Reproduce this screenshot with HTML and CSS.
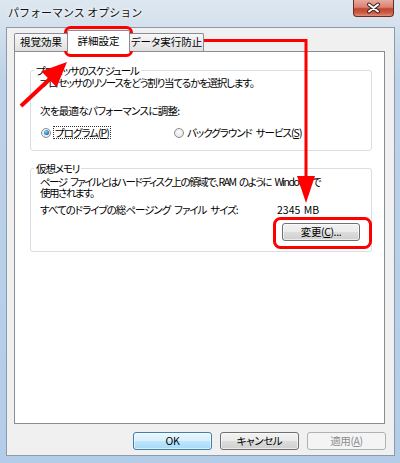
FILE: index.html
```html
<!DOCTYPE html>
<html lang="ja">
<head>
<meta charset="utf-8">
<title>パフォーマンス オプション</title>
<link rel="stylesheet" href="styles.css">
</head>
<body>
<div class="window">
  <div class="titlebar">
    <span class="title">パフォーマンス オプション</span>
    <div class="close">
      <svg width="41" height="17" viewBox="0 0 41 17">
        <path d="M16 4.5 L25 11.5 M25 4.5 L16 11.5" stroke="#3b2320" stroke-width="4" stroke-linecap="round" fill="none"/>
        <path d="M16 4.5 L25 11.5 M25 4.5 L16 11.5" stroke="#ffffff" stroke-width="2" stroke-linecap="round" fill="none"/>
      </svg>
    </div>
  </div>
  <div class="client">
    <div class="tabs">
      <div class="tab t1">視覚効果</div>
      <div class="tab t2 active">詳細設定</div>
      <div class="tab t3">データ実行防止</div>
    </div>
    <div class="panel">
      <fieldset class="group g1">
        <legend>プロセッサのスケジュール</legend>
        <p class="line first">プロセッサのリソースをどう割り当てるかを選択します。</p>
        <p class="line adjust">次を最適なパフォーマンスに調整:</p>
        <div class="radios">
          <label class="radio"><span class="dot checked"></span><span class="focus">プログラム(<u>P</u>)</span></label>
          <label class="radio"><span class="dot"></span><span>バックグラウンド サービス(<u>S</u>)</span></label>
        </div>
      </fieldset>
      <fieldset class="group g2">
        <legend>仮想メモリ</legend>
        <p class="desc">ページ ファイルとはハードディスク上の領域で、RAM のように Windows で<br>使用されます。</p>
        <div class="size-row"><span>すべてのドライブの総ページング ファイル サイズ:</span><span class="mb">2345 MB</span></div>
        <div class="btn-row"><button class="btn">変更(<u>C</u>)...</button></div>
      </fieldset>
    </div>
    <div class="footer">
      <button class="btn default">OK</button>
      <button class="btn">キャンセル</button>
      <button class="btn disabled">適用(<u>A</u>)</button>
    </div>
  </div>
  <svg class="annot" width="400" height="463" viewBox="0 0 400 463">
    <rect x="65.5" y="27.5" width="66" height="28" rx="5" ry="5" fill="none" stroke="#ff0000" stroke-width="3"/>
    <rect x="274.5" y="218.5" width="96" height="29" rx="6" ry="6" fill="none" stroke="#ff0000" stroke-width="3"/>
    <polyline points="133,40.5 306,40.5 306,180" fill="none" stroke="#ff0000" stroke-width="3"/>
    <polygon points="297,176 315,176 306,203" fill="#ff0000"/>
    <line x1="21" y1="106" x2="52" y2="77" stroke="#ff0000" stroke-width="4"/>
    <polygon points="67,62 56.6,87.3 41.4,71.3" fill="#ff0000"/>
  </svg>
</div>
</body>
</html>
```
FILE: styles.css
```css
* { box-sizing: border-box; }
html, body { margin: 0; padding: 0; }
body {
  width: 400px;
  height: 463px;
  overflow: hidden;
  font-family: "Noto Sans CJK JP", "Noto Sans", sans-serif;
  font-size: 10.5px;
  font-feature-settings: "palt";
  color: #000;
  background: #fff;
}
.window {
  position: relative;
  width: 400px;
  height: 463px;
  padding: 0 5px 7px 6px;
  display: flex;
  flex-direction: column;
  background: linear-gradient(180deg, #dde7f0 0px, #d4e0ec 27px, #bcd2e8 80px, #b3cde8 100%);
}
.titlebar {
  height: 27px;
  flex: none;
  display: flex;
  justify-content: space-between;
  align-items: flex-start;
}
.title {
  margin-top: 4px;
  padding-left: 2px;
  font-size: 11px;
  line-height: 16px;
  font-feature-settings: normal;
  color: #111;
  white-space: nowrap;
  text-shadow: 0 0 5px #fff, 0 0 3px #fff;
}
.close {
  width: 41px;
  height: 17px;
  margin-right: 1px;
  border: 1px solid #6b2c22;
  border-top: none;
  border-radius: 0 0 4px 4px;
  background: linear-gradient(180deg, #e7aa9e 0%, #d98272 45%, #c4452f 55%, #cc5b44 80%, #e08f78 100%);
}
.close svg { display: block; margin-left: -1px; }
.client {
  flex: 1;
  display: flex;
  flex-direction: column;
  border: 1px solid #8b9bad;
  background: #f0f0f0;
  padding: 2px 9px 5px 7px;
}
.tabs {
  display: flex;
  align-items: flex-end;
  height: 21px;
  flex: none;
  position: relative;
  z-index: 1;
}
.tab {
  height: 18px;
  border: 1px solid #898c95;
  border-bottom: none;
  border-radius: 2px 2px 0 0;
  line-height: 16px;
  text-align: center;
  white-space: nowrap;
  background: linear-gradient(180deg, #f8f8f8 0%, #ececec 50%, #e0e0e0 100%);
}
.t1 { width: 54px; }
.t2 { width: 63px; }
.t3 { width: 75px; }
.tab.active {
  height: 22px;
  margin: 0 -1px -1px;
  line-height: 20px;
  background: #fff;
}
.panel {
  height: 373px;
  flex: none;
  background: #fff;
  border: 1px solid #898c95;
  padding: 12px 12px 0 15px;
}
.group {
  margin: 0;
  min-width: 0;
  border: 1px solid #d5dfe5;
  border-radius: 3px;
  padding: 0 11px 11px 9px;
  letter-spacing: -1px;
  word-spacing: 2.5px;
  white-space: nowrap;
}
.group legend {
  margin-left: -6px;
  padding: 0 2px;
  line-height: 13px;
  letter-spacing: -1.1px;
}
.line { margin: 0; line-height: 12px; }
.first { letter-spacing: -1.2px; }
.adjust { margin-top: 16px; letter-spacing: -0.7px; }
.radios {
  margin-top: 9px;
  display: grid;
  grid-template-columns: 133px auto;
  height: 13px;
  line-height: 13px;
}
.radio {
  display: flex;
  align-items: center;
  gap: 3px;
}
.dot {
  width: 10px;
  height: 10px;
  margin-left: 1px;
  border-radius: 50%;
  border: 1px solid #8e8f8f;
  background: radial-gradient(circle at 50% 40%, #ffffff 0%, #e6e6e6 70%, #d0d0d0 100%);
  position: relative;
  flex: none;
}
.dot.checked::after {
  content: "";
  position: absolute;
  left: 1.5px;
  top: 1.5px;
  width: 5px;
  height: 5px;
  border-radius: 50%;
  background: radial-gradient(circle at 40% 35%, #8fe0ff 0%, #2a8ad3 50%, #0c4a86 100%);
}
.focus {
  border: 1px dotted #333;
  padding: 0 1px;
  line-height: 11px;
  margin-left: -1px;
}
.g2 { margin-top: 11px; padding-bottom: 10px; }
.desc { margin: 0; padding-top: 1px; line-height: 11px; letter-spacing: -1.5px; }
.size-row {
  margin-top: 6px;
  line-height: 12px;
  display: grid;
  grid-template-columns: 237px auto;
}
.mb { letter-spacing: 0; word-spacing: 1px; }
.btn-row {
  margin-top: 7px;
  display: flex;
  justify-content: flex-end;
}
.btn {
  width: 79px;
  height: 18px;
  padding: 0;
  font: inherit;
  font-feature-settings: "palt";
  letter-spacing: -0.4px;
  word-spacing: 0;
  line-height: 16px;
  color: #000;
  border: 1px solid #707070;
  border-radius: 3px;
  background: linear-gradient(180deg, #f2f2f2 0%, #ebebeb 49%, #dddddd 50%, #cfcfcf 100%);
  box-shadow: inset 0 0 0 1px rgba(255,255,255,0.6);
}
.btn-row .btn { width: 78px; }
.footer {
  flex: none;
  display: flex;
  justify-content: flex-end;
  gap: 8px;
  padding-top: 8px;
  margin-right: -1px;
}
.btn.default {
  border-color: #3c7fb1;
  background: linear-gradient(180deg, #eaf6fd 0%, #d9f0fc 49%, #bee6fd 50%, #a7d9f5 100%);
}
.btn.disabled {
  color: #8d8d8d;
  border-color: #adb2b5;
  background: #f4f4f4;
  box-shadow: none;
}
.annot {
  position: absolute;
  left: 0;
  top: 0;
  pointer-events: none;
}
```
